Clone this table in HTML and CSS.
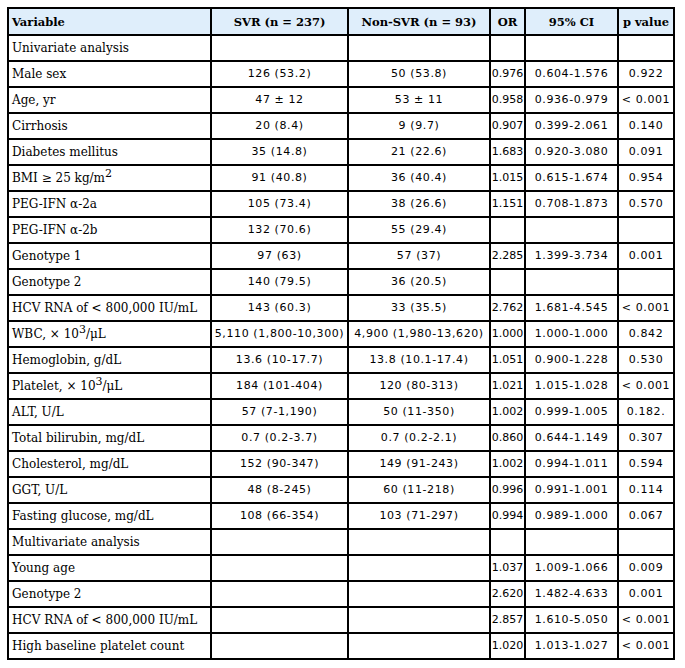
FILE: index.html
```html
<!DOCTYPE html>
<html>
<head>
<meta charset="utf-8">
<link rel="stylesheet" href="styles.css">
</head>
<body>
<table class="tbl">
<colgroup>
<col class="c1"><col class="c2"><col class="c3"><col class="c4"><col class="c5"><col class="c6">
</colgroup>
<thead>
<tr><th class="lbl">Variable</th><th>SVR (n = 237)</th><th>Non-SVR (n = 93)</th><th>OR</th><th>95% CI</th><th class="pv">p value</th></tr>
</thead>
<tbody>
<tr><td class="lbl">Univariate analysis</td><td></td><td></td><td class="or"></td><td></td><td></td></tr>
<tr><td class="lbl">Male sex</td><td>126 (53.2)</td><td>50 (53.8)</td><td class="or">0.976</td><td>0.604-1.576</td><td>0.922</td></tr>
<tr><td class="lbl">Age, yr</td><td>47 ± 12</td><td>53 ± 11</td><td class="or">0.958</td><td>0.936-0.979</td><td>&lt; 0.001</td></tr>
<tr><td class="lbl">Cirrhosis</td><td>20 (8.4)</td><td>9 (9.7)</td><td class="or">0.907</td><td>0.399-2.061</td><td>0.140</td></tr>
<tr><td class="lbl">Diabetes mellitus</td><td>35 (14.8)</td><td>21 (22.6)</td><td class="or">1.683</td><td>0.920-3.080</td><td>0.091</td></tr>
<tr><td class="lbl">BMI ≥ 25 kg/m<sup>2</sup></td><td>91 (40.8)</td><td>36 (40.4)</td><td class="or">1.015</td><td>0.615-1.674</td><td>0.954</td></tr>
<tr><td class="lbl">PEG-IFN α-2a</td><td>105 (73.4)</td><td>38 (26.6)</td><td class="or">1.151</td><td>0.708-1.873</td><td>0.570</td></tr>
<tr><td class="lbl">PEG-IFN α-2b</td><td>132 (70.6)</td><td>55 (29.4)</td><td class="or"></td><td></td><td></td></tr>
<tr><td class="lbl">Genotype 1</td><td>97 (63)</td><td>57 (37)</td><td class="or">2.285</td><td>1.399-3.734</td><td>0.001</td></tr>
<tr><td class="lbl">Genotype 2</td><td>140 (79.5)</td><td>36 (20.5)</td><td class="or"></td><td></td><td></td></tr>
<tr><td class="lbl">HCV RNA of &lt; 800,000 IU/mL</td><td>143 (60.3)</td><td>33 (35.5)</td><td class="or">2.762</td><td>1.681-4.545</td><td>&lt; 0.001</td></tr>
<tr><td class="lbl">WBC, × 10<sup>3</sup>/μL</td><td>5,110 (1,800-10,300)</td><td>4,900 (1,980-13,620)</td><td class="or">1.000</td><td>1.000-1.000</td><td>0.842</td></tr>
<tr><td class="lbl">Hemoglobin, g/dL</td><td>13.6 (10-17.7)</td><td>13.8 (10.1-17.4)</td><td class="or">1.051</td><td>0.900-1.228</td><td>0.530</td></tr>
<tr><td class="lbl">Platelet, × 10<sup>3</sup>/μL</td><td>184 (101-404)</td><td>120 (80-313)</td><td class="or">1.021</td><td>1.015-1.028</td><td>&lt; 0.001</td></tr>
<tr><td class="lbl">ALT, U/L</td><td>57 (7-1,190)</td><td>50 (11-350)</td><td class="or">1.002</td><td>0.999-1.005</td><td>0.182.</td></tr>
<tr><td class="lbl">Total bilirubin, mg/dL</td><td>0.7 (0.2-3.7)</td><td>0.7 (0.2-2.1)</td><td class="or">0.860</td><td>0.644-1.149</td><td>0.307</td></tr>
<tr><td class="lbl">Cholesterol, mg/dL</td><td>152 (90-347)</td><td>149 (91-243)</td><td class="or">1.002</td><td>0.994-1.011</td><td>0.594</td></tr>
<tr><td class="lbl">GGT, U/L</td><td>48 (8-245)</td><td>60 (11-218)</td><td class="or">0.996</td><td>0.991-1.001</td><td>0.114</td></tr>
<tr><td class="lbl">Fasting glucose, mg/dL</td><td>108 (66-354)</td><td>103 (71-297)</td><td class="or">0.994</td><td>0.989-1.000</td><td>0.067</td></tr>
<tr><td class="lbl">Multivariate analysis</td><td></td><td></td><td class="or"></td><td></td><td></td></tr>
<tr><td class="lbl">Young age</td><td></td><td></td><td class="or">1.037</td><td>1.009-1.066</td><td>0.009</td></tr>
<tr><td class="lbl">Genotype 2</td><td></td><td></td><td class="or">2.620</td><td>1.482-4.633</td><td>0.001</td></tr>
<tr><td class="lbl">HCV RNA of &lt; 800,000 IU/mL</td><td></td><td></td><td class="or">2.857</td><td>1.610-5.050</td><td>&lt; 0.001</td></tr>
<tr><td class="lbl">High baseline platelet count</td><td></td><td></td><td class="or">1.020</td><td>1.013-1.027</td><td>&lt; 0.001</td></tr>
</tbody>
</table>
</body>
</html>
```
FILE: styles.css
```css
html, body {
  margin: 0;
  padding: 0;
  background: #fff;
}
body {
  padding: 7px 0 0 7px;
}
.tbl {
  border-collapse: collapse;
  table-layout: fixed;
  width: 666px;
  font-family: "DejaVu Sans", Verdana, sans-serif;
  font-size: 11px;
  color: #000;
}
.c1 { width: 203px; }
.c2 { width: 137px; }
.c3 { width: 142px; }
.c4 { width: 35px; }
.c5 { width: 93px; }
.c6 { width: 56px; }
.tbl th, .tbl td {
  border: 2px solid #000;
  height: 24px;
  padding: 0 1px;
  text-align: center;
  vertical-align: middle;
  white-space: nowrap;
  line-height: 14px;
}
.tbl td {
  letter-spacing: 0.6px;
}
.tbl td.or {
  letter-spacing: 0;
  padding: 0;
}
.tbl th {
  background: #dfeefb;
  font-family: "DejaVu Serif", Georgia, serif;
  font-weight: bold;
  font-size: 11.5px;
  height: 25px;
}
.tbl th.lbl, .tbl td.lbl {
  text-align: left;
  padding-left: 3px;
}
.tbl td.lbl {
  font-family: "DejaVu Serif", Georgia, serif;
  font-size: 12px;
  letter-spacing: 0;
}
sup {
  font-size: 11px;
  line-height: 0;
  vertical-align: 5px;
}
```
